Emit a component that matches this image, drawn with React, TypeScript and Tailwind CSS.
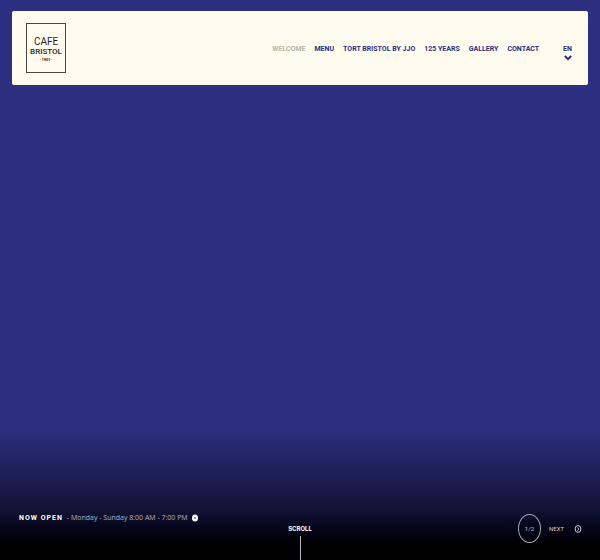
const NAV = [
  { label: "WELCOME", href: "#welcome", active: true },
  { label: "MENU", href: "#menu" },
  { label: "TORT BRISTOL BY JJO", href: "#tort" },
  { label: "125 YEARS", href: "#years" },
  { label: "GALLERY", href: "#gallery" },
  { label: "CONTACT", href: "#contact" },
];

function Logo() {
  return (
    <a
      href="#welcome"
      aria-label="Cafe Bristol"
      className="flex h-[50px] w-10 flex-col items-center justify-center border border-[#4b473c] text-[#29261f]"
    >
      <svg viewBox="0 0 38 30" className="h-[30px] w-[38px]" fill="currentColor" fontFamily="Roboto, sans-serif">
        <text x="19" y="12" textAnchor="middle" fontSize="10">CAFE</text>
        <text x="19" y="21" textAnchor="middle" fontSize="8" fontWeight="500">BRISTOL</text>
        <text x="19" y="28" textAnchor="middle" fontSize="4" fontWeight="700">-1901-</text>
      </svg>
    </a>
  );
}

function Header() {
  return (
    <header className="mx-3 mt-[11px] flex items-center justify-between rounded-xs bg-[#fffcef] px-3.5 py-3">
      <Logo />
      <div className="flex items-start gap-6 pt-2 pr-0.5 text-[7px] leading-[10px] font-bold text-[#2c2e7d]">
        <nav className="flex gap-[9px] whitespace-nowrap">
          {NAV.map((item) => (
            <a key={item.label} href={item.href} className={item.active ? "text-[#b7b5a7]" : ""}>
              {item.label}
            </a>
          ))}
        </nav>
        <button type="button" aria-label="Change language" className="flex flex-col items-center">
          EN
          <svg viewBox="0 0 8 6" className="mt-px h-1.5 w-2" fill="none" stroke="currentColor" strokeWidth="2">
            <path d="M0.8 1 4 4.2 7.2 1" />
          </svg>
        </button>
      </div>
    </header>
  );
}

export default function App() {
  return (
    <div className="flex min-h-screen flex-col bg-[#2c2f80] font-['Roboto',sans-serif] text-white">
      <Header />
      <main className="flex-1" />
      <footer className="grid h-[130px] grid-cols-[1fr_auto_1fr] items-end bg-linear-to-b from-[#2c2f80] via-[#111335] via-62% to-black">
        <div className="mb-[35px] flex items-center gap-1 pl-[19px] text-[7px] leading-[14px] whitespace-nowrap">
          <strong className="tracking-[1px]">NOW OPEN</strong>
          <span className="font-['Open_Sans',sans-serif] text-[#b6b6cc]">- Monday - Sunday 8:00 AM - 7:00 PM</span>
          <svg viewBox="0 0 6 8" className="h-2 w-1.5">
            <ellipse cx="3" cy="4" rx="3" ry="3.6" fill="white" />
            <ellipse cx="3" cy="4" rx="0.8" ry="0.9" fill="#5a5b80" />
          </svg>
        </div>
        <a href="#welcome" className="flex flex-col items-center font-['Inter',sans-serif] text-[6px] leading-[10px] font-bold">
          SCROLL
          <span className="mt-0.5 h-6 w-px bg-[#b5b5bd]" />
        </a>
        <div className="mr-[18px] mb-[17px] flex items-center justify-end gap-2 text-[6px] text-[#c9c9d5]">
          <span className="flex h-[29px] w-[23px] items-center justify-center rounded-[50%] border border-[#a5a5b3]">1/2</span>
          <button type="button" className="flex items-center gap-2.5">
            NEXT
            <svg viewBox="0 0 8 8" className="size-2" fill="none" stroke="currentColor">
              <ellipse cx="4" cy="4" rx="2.9" ry="3.4" />
              <path d="M3.3 2.5 4.9 4 3.3 5.5" />
            </svg>
          </button>
        </div>
      </footer>
    </div>
  );
}
